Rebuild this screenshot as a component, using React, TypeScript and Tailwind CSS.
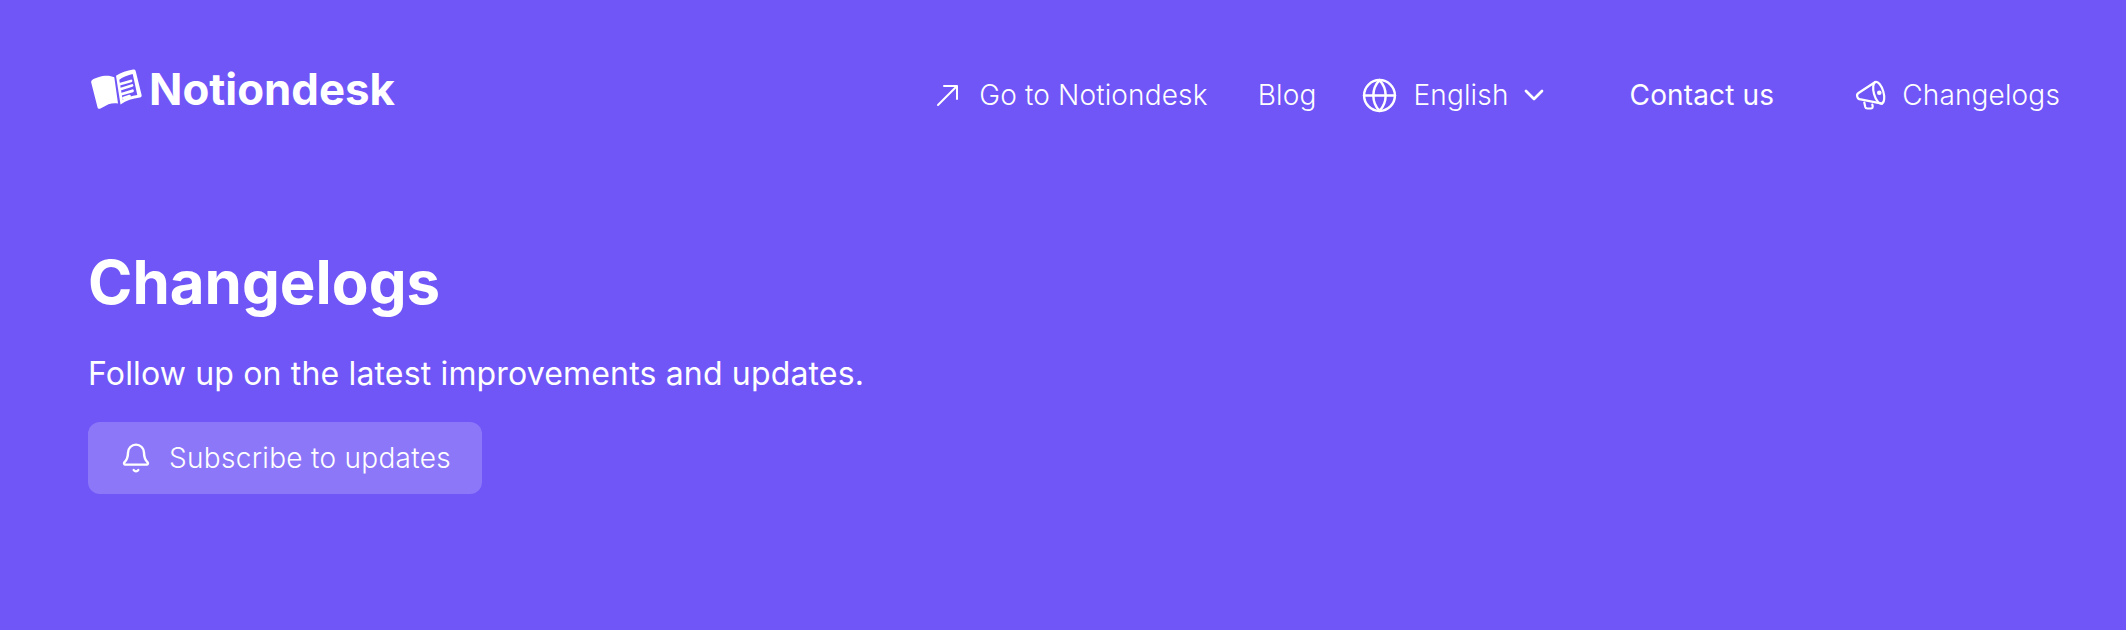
import { Bell, ChevronDown, Globe } from "lucide-react";

const Logo = () => (
  <svg width="52" height="42" viewBox="0 0 52 42" fill="none">
    <path
      d="M3.500 10C8 8 12 6.800 15 6.700c3.500-.2 7 .2 9.300 1.600L28 34.500c-3-.5-6.500-.3-9.500.7L10.500 39.500c-1.500.7-2.700.2-3-1.300L1.200 13.500c-.3-1.500.7-2.800 2.300-3.500Z"
      fill="white"
    />
    <path
      fillRule="evenodd"
      clipRule="evenodd"
      d="M26 6.700C31 3.500 37 1.500 43 .6c1.500-.2 2.500.4 2.800 1.800L51.600 26c.3 1.500-.4 2.400-1.800 2.600-7 1-13.500 3-19.300 6.900L26 6.700ZM29.300 10.700C33 8 38 6 42.700 5l4.600 21c-5.500.8-10.500 2.300-14.600 4.700L29.300 10.700Z"
      fill="white"
    />
    <path d="M30.500 15l10.500-3M31 20l11-3.500M32 25l10.500-3.200M33.500 29l6-1.800" stroke="white" strokeWidth="2.800" strokeLinecap="round" />
  </svg>
);

const GoArrow = () => (
  <svg width="23" height="23" viewBox="0 0 23 23" fill="none" stroke="white" strokeWidth="2" strokeLinecap="round" strokeLinejoin="round">
    <path d="M2 21 21 2M8 2h13v13" />
  </svg>
);

const Horn = () => (
  <svg width="32" height="32" viewBox="0 0 32 32" fill="none" stroke="white" strokeWidth="2.200" strokeLinecap="round" strokeLinejoin="round">
    <ellipse cx="24.700" cy="13.800" rx="4.800" ry="11.200" transform="rotate(-16 24.700 13.800)" />
    <path d="M21.300 3 4.500 14c-1.500 1-1.800 2.200-1.200 3.800.6 1.700 1.700 2.700 3.400 2.500L28 24.700" />
    <path d="M10.300 23.500 11.300 28c.3 1.200 1 1.500 2 1.500h3.500c1.500 0 2-1 1.900-2.300l-.4-1.700" />
    <circle cx="25.300" cy="13.700" r="1.200" />
  </svg>
);

const NavItem = ({ children, className = "" }: { children: React.ReactNode; className?: string }) => (
  <a className={`flex items-center text-[28px] leading-[34px] tracking-[0.15px] text-white ${className}`}>{children}</a>
);

export default function App() {
  return (
    <div className="h-[630px] w-full bg-[#7055f7] pl-[88px] pr-[66px] font-['Inter',sans-serif] text-white">
      <header className="flex items-center justify-between pt-[63px]">
        <div className="flex items-center gap-[7px] pl-0.5">
          <Logo />
          <span className="text-[43.8px] font-bold leading-[54px]">Notiondesk</span>
        </div>
        <nav className="flex items-center pt-2.5">
          <NavItem className="gap-[20px] font-light">
            <GoArrow />
            Go to Notiondesk
          </NavItem>
          <NavItem className="ml-[50px] font-light">Blog</NavItem>
          <NavItem className="ml-[48px] font-light">
            <Globe size={37} strokeWidth={1.600} className="-mx-[3px]" />
            <span className="ml-[18px]">English</span>
            <ChevronDown size={32} strokeWidth={2} className="ml-[9px]" />
          </NavItem>
          <NavItem className="ml-[80px] font-normal">Contact us</NavItem>
          <NavItem className="ml-[80px] gap-[16px] font-light">
            <Horn />
            Changelogs
          </NavItem>
        </nav>
      </header>
      <main className="flex flex-col items-start pt-[129px]">
        <h1 className="text-[60px] font-bold leading-[72px]">Changelogs</h1>
        <p className="mt-[36px] text-[32px] leading-[40px] tracking-[0.16px]">Follow up on the latest improvements and updates.</p>
        <button className="mt-[28px] flex h-[72px] w-[394px] items-center gap-[17px] rounded-xl bg-white/20 pl-[32px] text-[28px] font-light tracking-[0.3px]">
          <Bell size={32} strokeWidth={1.800} />
          Subscribe to updates
        </button>
      </main>
    </div>
  );
}
